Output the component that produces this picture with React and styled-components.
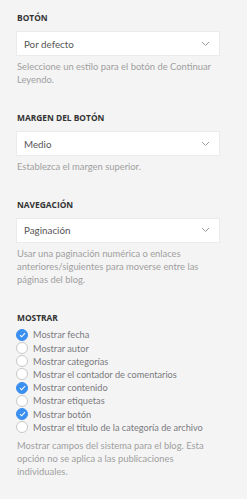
import React from "react";
import styled, { createGlobalStyle } from "styled-components";

const Global = createGlobalStyle`
  html, body { margin: 0; padding: 0; background: #f4f4f4; }
  body { font-family: "Lato", "Open Sans", sans-serif; }
`;

const Panel = styled.div`
  width: 247px;
  min-height: 499px;
  box-sizing: border-box;
  padding: 12px 27px 20px 16px;
  background: #f4f4f4;
  display: flex;
  flex-direction: column;
  gap: 25.5px;
`;

const Section = styled.section`
  display: flex;
  flex-direction: column;
`;

const Heading = styled.h3`
  margin: 0 0 0 1px;
  font-family: "Open Sans", sans-serif;
  font-size: 8.4px;
  font-weight: 700;
  color: #333;
  line-height: 11px;
`;

const Select = styled.div`
  margin-top: 8px;
  height: 25px;
  box-sizing: border-box;
  background: #fff;
  border: 1px solid #ebebeb;
  display: flex;
  align-items: center;
  justify-content: space-between;
  padding: 0 9px 0 7px;
  font-size: 9.8px;
  color: #555;
`;

const Help = styled.p`
  margin: ${(p) => p.$top || 4}px 0 0 1px;
  font-size: 9.4px;
  line-height: 13.3px;
  color: #a0a0a0;
`;

const List = styled.div`
  margin-top: 5px;
  display: flex;
  flex-direction: column;
`;

const Row = styled.label`
  display: flex;
  align-items: center;
  gap: 5px;
  height: 13.2px;
  font-size: 9.2px;
  color: #7a7a80;
  white-space: nowrap;
`;

const Circle = styled.span`
  width: 12px;
  height: 12px;
  border-radius: 50%;
  box-sizing: border-box;
  flex: none;
  display: flex;
  align-items: center;
  justify-content: center;
  background: ${(p) => (p.$on ? "#3b8ff0" : "#fff")};
  border: 1px solid ${(p) => (p.$on ? "#3b8ff0" : "#c8c8c8")};
`;

const Chevron = () => (
  <svg width="9" height="6" viewBox="0 0 9 6">
    <path d="M1 1l3.5 3.5L8 1" fill="none" stroke="#9a9a9a" strokeWidth="1" />
  </svg>
);

const Check = () => (
  <svg width="7" height="6" viewBox="0 0 7 6">
    <path d="M1 3.2l1.7 1.6L6 1.2" fill="none" stroke="#fff" strokeWidth="1.1" />
  </svg>
);

const options = [
  ["Mostrar fecha", true],
  ["Mostrar autor", false],
  ["Mostrar categorías", false],
  ["Mostrar el contador de comentarios", false],
  ["Mostrar contenido", true],
  ["Mostrar etiquetas", false],
  ["Mostrar botón", true],
  ["Mostrar el título de la categoría de archivo", false],
];

export default function App() {
  return (
    <>
      <Global />
      <Panel>
        <Section>
          <Heading>BOTÓN</Heading>
          <Select>
            <span>Por defecto</span>
            <Chevron />
          </Select>
          <Help>Seleccione un estilo para el botón de Continuar Leyendo.</Help>
        </Section>
        <Section>
          <Heading>MARGEN DEL BOTÓN</Heading>
          <Select>
            <span>Medio</span>
            <Chevron />
          </Select>
          <Help>Establezca el margen superior.</Help>
        </Section>
        <Section>
          <Heading>NAVEGACIÓN</Heading>
          <Select>
            <span>Paginación</span>
            <Chevron />
          </Select>
          <Help>
            Usar una paginación numérica o enlaces anteriores/siguientes para
            moverse entre las páginas del blog.
          </Help>
        </Section>
        <Section>
          <Heading>MOSTRAR</Heading>
          <List>
            {options.map(([label, on]) => (
              <Row key={label}>
                <Circle $on={on}>{on && <Check />}</Circle>
                {label}
              </Row>
            ))}
          </List>
          <Help $top={5}>
            Mostrar campos del sistema para el blog. Esta opción no se aplica a
            las publicaciones individuales.
          </Help>
        </Section>
      </Panel>
    </>
  );
}
